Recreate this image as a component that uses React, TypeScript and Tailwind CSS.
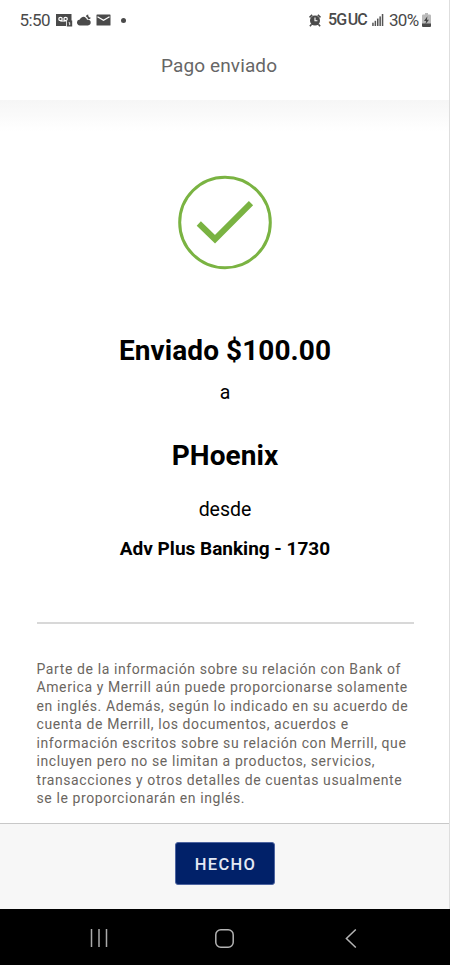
import React from "react";

const legalLines = [
  "Parte de la información sobre su relación con Bank of",
  "America y Merrill aún puede proporcionarse solamente",
  "en inglés. Además, según lo indicado en su acuerdo de",
  "cuenta de Merrill, los documentos, acuerdos e",
  "información escritos sobre su relación con Merrill, que",
  "incluyen pero no se limitan a productos, servicios,",
  "transacciones y otros detalles de cuentas usualmente",
  "se le proporcionarán en inglés.",
];

function VoicemailIcon() {
  return (
    <svg width="17" height="14" viewBox="0 0 17 14" fill="none">
      <path d="M0 1h15.5v7H10v5H0z" fill="#4a4a4a" />
      <circle cx="4.5" cy="6" r="1.7" stroke="#fff" strokeWidth="1.2" />
      <circle cx="9.6" cy="6" r="1.7" stroke="#fff" strokeWidth="1.2" />
      <path d="M4.5 8h5" stroke="#fff" strokeWidth="1.2" />
      <rect x="10.8" y="7.5" width="5.4" height="6" fill="#4a4a4a" />
      <path d="M12.7 9.7h1v2.4" stroke="#fff" strokeWidth="0.9" />
    </svg>
  );
}

function CloudIcon() {
  return (
    <svg width="14" height="12" viewBox="0 0 14 12" fill="#4a4a4a">
      <path d="M3.2 11.4a3 3 0 0 1-.4-6A3.7 3.7 0 0 1 9 3.9c.6.8.8 1.7 1.9 1.9a2.8 2.8 0 0 1 0 5.6z" />
      <path d="M8.8 2.2A3 3 0 0 1 11.2.5a3 3 0 0 0 2.7 3.3 2.8 2.8 0 0 1-2.7 1.5A4.9 4.9 0 0 0 8.8 2.2z" />
    </svg>
  );
}

function MailIcon() {
  return (
    <svg width="15" height="12" viewBox="0 0 15 12">
      <rect x="0.5" y="0.5" width="14" height="11" rx="0.6" fill="#4a4a4a" />
      <path d="M1.5 2.7l6 3.5 6-3.5" stroke="#fff" strokeWidth="1.3" fill="none" />
    </svg>
  );
}

function AlarmIcon() {
  return (
    <svg width="12" height="13" viewBox="0 0 12 13" fill="none">
      <circle cx="6" cy="6.6" r="5" fill="#4a4a4a" />
      <path d="M.5 3.4L3.2.9M11.5 3.4L8.8.9M2.6 10.2L.9 12.2M9.4 10.2l1.7 2" stroke="#4a4a4a" strokeWidth="1.6" />
      <path d="M6 3.6v3.2h2.4" stroke="#fff" strokeWidth="1.1" />
    </svg>
  );
}

function SignalIcon() {
  return (
    <svg width="12" height="12" viewBox="0 0 12 12" fill="#555">
      <rect x="0.2" y="8.7" width="1.5" height="3.3" />
      <rect x="2.6" y="6.8" width="1.5" height="5.2" />
      <rect x="5" y="4.6" width="1.5" height="7.4" />
      <rect x="7.4" y="2.4" width="1.5" height="9.6" />
      <rect x="9.8" y="0" width="1.5" height="12" />
    </svg>
  );
}

function BatteryIcon() {
  return (
    <svg width="9" height="14" viewBox="0 0 9 14">
      <path d="M3 0h3v1.5h1.8Q9 1.5 9 2.7V12.8Q9 14 7.8 14H1.2Q0 14 0 12.8V2.7Q0 1.5 1.2 1.5H3z" fill="#bababa" />
      <path d="M0 10.5h9v2.3Q9 14 7.8 14H1.2Q0 14 0 12.8z" fill="#4a4a4a" />
      <path d="M5.4 3.3L2 8h2.1l-.6 3.2L7 6.7H4.9z" fill="#444" />
    </svg>
  );
}

function StatusBar() {
  return (
    <div className="flex h-10 items-center justify-between pl-[19.5px] pr-[18px] text-[#4a4a4a]">
      <div className="flex items-center">
        <span className="w-[36px] text-[17px] leading-5 tracking-[-0.6px]">5:50</span>
        <VoicemailIcon />
        <span className="ml-1">
          <CloudIcon />
        </span>
        <span className="ml-[5px]">
          <MailIcon />
        </span>
        <span className="ml-[10px] size-[5px] rounded-full bg-[#4a4a4a]" />
      </div>
      <div className="flex items-center">
        <AlarmIcon />
        <span className="ml-[7px] w-[44px] text-[16px] font-medium tracking-[-0.9px] whitespace-nowrap [word-spacing:-1.5px]">
          5G UC
        </span>
        <SignalIcon />
        <span className="ml-[5px] w-[33px] text-[17px] leading-5 tracking-[-0.7px] whitespace-nowrap">30%</span>
        <BatteryIcon />
      </div>
    </div>
  );
}

function NavBar() {
  return (
    <nav className="flex h-14 items-center justify-between bg-black pl-[90px] pr-[93px] pt-[2px]">
      <svg width="18" height="18" viewBox="0 0 18 18" stroke="#aaa" strokeWidth="1.5">
        <path d="M1.5 0v18M9 0v18M16.5 0v18" />
      </svg>
      <svg className="-ml-[5px]" width="19" height="19" viewBox="0 0 19 19" fill="none" stroke="#b4b4b4" strokeWidth="1.5">
        <rect x="0.8" y="0.8" width="17.4" height="17.4" rx="5" />
      </svg>
      <svg width="12" height="19" viewBox="0 0 12 19" fill="none" stroke="#b4b4b4" strokeWidth="1.5">
        <path d="M10.8.5L1.4 9.5l9.4 9" />
      </svg>
    </nav>
  );
}

export default function App() {
  return (
    <div className="flex h-[965px] w-[450px] flex-col overflow-hidden bg-white font-[Roboto,sans-serif]">
      <div className="flex min-h-0 flex-1 flex-col border-r border-[#dedede]">
        <header className="h-[100px] shrink-0">
          <StatusBar />
          <h1 className="pt-[12px] pl-[161px] text-[19px] leading-7 tracking-[0.12px] whitespace-nowrap text-[#666]">
            Pago enviado
          </h1>
        </header>
        <main className="flex min-h-0 flex-1 flex-col items-center bg-linear-to-b from-[#f6f6f6] to-white to-[32px] text-black">
          <svg className="mt-[75px] shrink-0" width="96" height="96" viewBox="0 0 96 96" fill="none" stroke="#7ab342">
            <circle cx="48" cy="47.5" r="45.3" strokeWidth="3" />
            <path d="M21.8 48.5L38 64.2 74 28.2" strokeWidth="6" />
          </svg>
          <h2 className="mt-[62px] pl-px text-[28px] leading-9 font-bold tracking-[0.07px] whitespace-nowrap">
            Enviado $100.00
          </h2>
          <p className="mt-[12px] pl-px text-[19.5px] leading-6">a</p>
          <h2 className="mt-[33px] pl-px text-[28px] leading-9 font-bold tracking-[0.07px] whitespace-nowrap">PHoenix</h2>
          <p className="mt-[24px] pl-px text-[19.5px] leading-6">desde</p>
          <p className="mt-[15px] pl-px text-[19px] leading-6 font-bold whitespace-nowrap">Adv Plus Banking - 1730</p>
          <div className="mt-[61px] ml-px h-[2px] w-[377px] shrink-0 bg-[#d8d8d8]" />
          <div className="mt-[36px] w-full pl-[36.5px] text-[14px] leading-[18.43px] tracking-[0.6px] text-[#6b665f]">
            {legalLines.map((line) => (
              <p key={line} className="whitespace-nowrap">
                {line}
              </p>
            ))}
          </div>
        </main>
        <footer className="flex h-[86px] shrink-0 justify-center border-t border-[#c8c8c8] bg-[#f7f7f7] pt-[18px]">
          <button className="h-[43px] w-[100px] rounded-[3px] border border-[#4d64a0] bg-[#012169] pt-[4px] pl-[2px] text-[16.5px] font-medium tracking-[1.3px] text-[#e4e9f5]">
            HECHO
          </button>
        </footer>
      </div>
      <NavBar />
    </div>
  );
}
